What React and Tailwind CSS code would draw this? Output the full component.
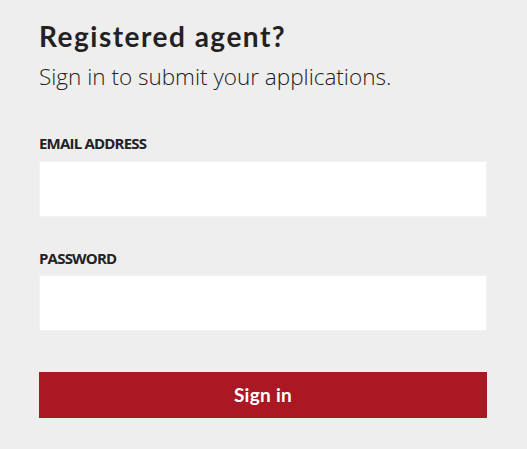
export default function App() {
  return (
    <div className="min-h-[449px] w-[527px] bg-[#eeeeee] pl-[39px] pr-[40px] pt-[18px] text-[#222222]">
      <h1 className="font-['Lato',sans-serif] text-[28px] leading-[36px] font-bold tracking-[1.5px]">
        Registered agent?
      </h1>
      <p className="mt-[8px] font-['Open_Sans',sans-serif] text-[22.5px] leading-[30px] font-light">
        Sign in to submit your applications.
      </p>
      <form className="mt-[41px] flex flex-col">
        <label className="font-['Open_Sans',sans-serif] text-[15px] leading-[20px] font-bold tracking-[-0.8px]">
          EMAIL ADDRESS
        </label>
        <input
          type="email"
          className="mt-[8px] h-[56px] w-[448px] border border-[#f2f2f2] bg-white outline-none"
        />
        <label className="mt-[31px] font-['Open_Sans',sans-serif] text-[15px] leading-[20px] font-bold tracking-[-0.8px]">
          PASSWORD
        </label>
        <input
          type="password"
          className="mt-[7px] h-[56px] w-[448px] border border-[#f2f2f2] bg-white outline-none"
        />
        <button
          type="button"
          className="mt-[41px] h-[46px] w-[448px] bg-[#aa1823] font-['Lato',sans-serif] text-[19px] font-bold tracking-[0.3px] text-white"
        >
          Sign in
        </button>
      </form>
    </div>
  );
}
